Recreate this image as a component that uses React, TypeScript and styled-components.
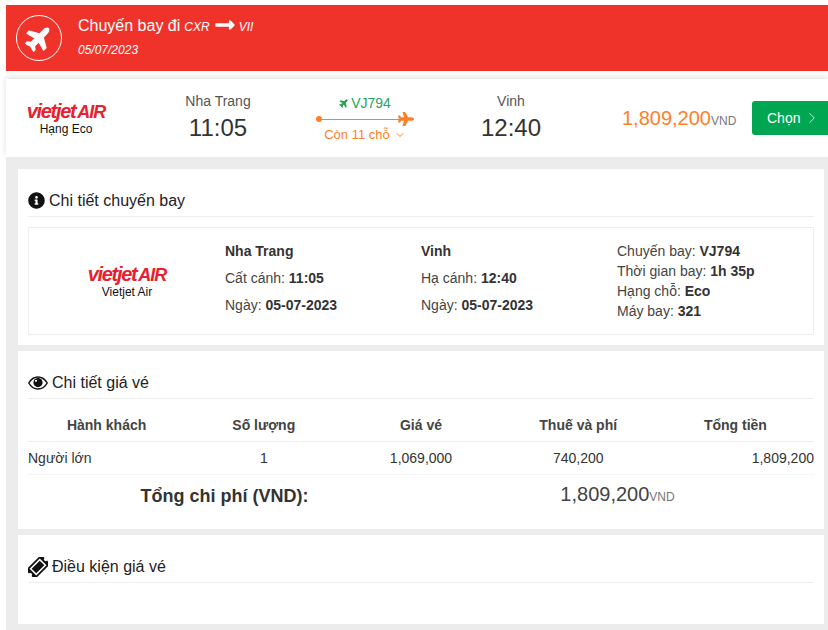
import styled, { createGlobalStyle } from "styled-components";
import { FaInfoCircle, FaLongArrowAltRight, FaPlane } from "react-icons/fa";
import { ChevronDown, ChevronRight } from "lucide-react";

const GlobalStyle = createGlobalStyle`
  * {
    box-sizing: border-box;
  }
  html, body {
    margin: 0;
    height: 630px;
    overflow: hidden;
    background: #fff;
    font-family: "Liberation Sans", Arial, sans-serif;
    font-size: 14px;
    color: #333;
  }
`;

const Page = styled.div`
  padding: 5px 0 0 6px;
  display: flex;
  flex-direction: column;
`;

const Header = styled.div`
  height: 66px;
  background: #ef332b;
  color: #fff;
  display: flex;
  align-items: center;
  padding-left: 10px;
  gap: 16px;
`;

const PlaneCircle = styled.div`
  width: 46px;
  height: 46px;
  border: 1px solid #fff;
  border-radius: 50%;
  display: flex;
  align-items: center;
  justify-content: center;
  font-size: 28px;

  svg {
    transform: rotate(-45deg);
  }
`;

const HeaderText = styled.div`
  display: flex;
  flex-direction: column;
  gap: 5px;
  margin-top: -3px;
`;

const HeaderTitle = styled.div`
  font-size: 16px;
  line-height: 20px;
  display: flex;
  align-items: center;
  gap: 4px;
`;

const Route = styled.i`
  font-size: 12px;
  margin-top: 2px;
`;

const RouteArrow = styled.span`
  display: flex;
  font-size: 22px;
  margin: -3px -1px 0 0;
`;

const HeaderDate = styled.i`
  font-size: 12px;
  line-height: 16px;
`;

const FlightCard = styled.div`
  margin-top: 8px;
  height: 78px;
  background: #fff;
  box-shadow: 0 -2px 6px rgba(0, 0, 0, 0.12);
  display: grid;
  grid-template-columns: 120px 184px 110px 182px 226px;
  align-items: center;
`;

const LogoBlock = styled.div`
  display: flex;
  flex-direction: column;
  align-items: center;
  color: #111;
  font-size: 12px;
  line-height: 14px;
`;

const Logo = styled.div`
  color: #e8212e;
  font-size: 20px;
  line-height: 20px;
  font-weight: bold;
  font-style: italic;
  letter-spacing: -1.3px;
  white-space: nowrap;
`;

const LogoAir = styled.span`
  font-size: 18px;
  margin-left: 2px;
  letter-spacing: -1px;
`;

const Stop = styled.div`
  display: flex;
  flex-direction: column;
  align-items: center;
  gap: 2px;
  color: #555;
`;

const StopCity = styled.div`
  font-size: 14px;
  line-height: 18px;
`;

const StopTime = styled.div`
  font-size: 24px;
  line-height: 32px;
  color: #333;
`;

const Path = styled.div`
  display: flex;
  flex-direction: column;
  align-items: center;
`;

const FlightCode = styled.div`
  color: #2aa35a;
  font-size: 14px;
  line-height: 18px;
  padding-top: 2px;
  display: flex;
  align-items: center;
  gap: 2px;

  svg {
    transform: rotate(-45deg);
  }
`;

const PathLine = styled.div`
  width: 98px;
  height: 12px;
  margin-top: 1px;
  display: flex;
  align-items: center;
  position: relative;
  color: #ff7f27;

  &::before {
    content: "";
    width: 6px;
    height: 6px;
    border-radius: 50%;
    background: #ff7f27;
    flex-shrink: 0;
  }

  &::after {
    content: "";
    flex: 1;
    height: 1px;
    background: #ff7f27;
  }

  svg {
    position: absolute;
    right: 0;
    top: -2px;
  }
`;

const Seats = styled.div`
  color: #ff7f27;
  font-size: 13px;
  line-height: 18px;
  margin-top: 1px;
  display: flex;
  align-items: center;
  gap: 4px;
`;

const PriceBlock = styled.div`
  display: flex;
  align-items: center;
  justify-content: space-between;
  padding-left: 20px;
`;

const Price = styled.div`
  color: #ff7f27;
  font-size: 20px;
`;

const Currency = styled.span`
  color: #777;
  font-size: 12px;
`;

const SelectButton = styled.button`
  width: 76px;
  height: 34px;
  border: none;
  padding: 0 0 0 15px;
  background: #00a651;
  color: #fff;
  border-radius: 3px 0 0 3px;
  font-family: inherit;
  font-size: 14px;
  display: flex;
  align-items: center;
  gap: 3px;
`;

const Sections = styled.div`
  background: #ececec;
  padding: 12px 4px 6px 12px;
  height: 473px;
  display: flex;
  flex-direction: column;
  gap: 6px;
`;

const Section = styled.section<{ $height: number }>`
  height: ${(p) => p.$height}px;
  background: #fff;
  padding: 0 10px;
  flex-shrink: 0;
`;

const SectionTitle = styled.h3`
  margin: 0;
  padding: 18px 0 2px;
  height: 48px;
  border-bottom: 1px solid #eee;
  font-weight: normal;
  font-size: 16px;
  line-height: 20px;
  color: #222;
  display: flex;
  align-items: center;
  gap: 4px;

  svg {
    color: #111;
    flex-shrink: 0;
  }
`;

const DetailBox = styled.div`
  margin-top: 10px;
  height: 108px;
  border: 1px solid #eee;
  display: grid;
  grid-template-columns: 196px 196px 196px 1fr;
  align-items: start;
`;

const DetailLogo = styled(LogoBlock)`
  align-self: center;
`;

const DetailCol = styled.div`
  padding-top: 10px;
  font-size: 14px;
  line-height: 27px;
  color: #444;

  b {
    color: #333;
  }
`;

const InfoCol = styled.div`
  padding-top: 13px;
  font-size: 14px;
  line-height: 20px;
  color: #444;

  b {
    color: #333;
  }
`;

const PriceRow = styled.div<{ $border?: string }>`
  display: grid;
  grid-template-columns: repeat(5, 1fr);
  align-items: center;
  height: 33px;
  border-bottom: 1px ${(p) => p.$border ?? "solid"} #eee;
`;

const HeadRow = styled(PriceRow)`
  margin-top: 10px;
  font-weight: bold;
  color: #444;
  text-align: center;
`;

const Cell = styled.div<{ $align?: string }>`
  text-align: ${(p) => p.$align ?? "center"};
  color: #333;
`;

const TotalRow = styled.div`
  display: grid;
  grid-template-columns: 1fr 1fr;
  height: 42px;
  align-items: center;
  text-align: center;
`;

const TotalLabel = styled.div`
  font-size: 18px;
  font-weight: bold;
  color: #333;
`;

const TotalValue = styled.div`
  font-size: 20px;
  color: #444;
  padding-bottom: 4px;
`;

const columns = [
  "Hành khách",
  "Số lượng",
  "Giá vé",
  "Thuế và phí",
  "Tổng tiền",
];

const EyeIcon = () => (
  <svg width="20" height="14" viewBox="0 0 20 14">
    <path
      d="M.8 7C3 3 6.4.9 10 .9S17 3 19.2 7C17 11 13.6 13.1 10 13.1S3 11 .8 7Z"
      fill="none"
      stroke="currentColor"
      strokeWidth="1.5"
    />
    <circle cx="10" cy="6.6" r="4.6" fill="currentColor" />
    <circle cx="8" cy="4.8" r="1.1" fill="#fff" />
  </svg>
);

const TicketIcon = () => (
  <svg width="20" height="20" viewBox="0 0 20 20">
    <g transform="rotate(-45 10 10)">
      <path
        d="M-1 3.5h22v4.7a1.8 1.8 0 0 0 0 3.6v4.7H-1v-4.7a1.8 1.8 0 0 0 0-3.6Z"
        fill="currentColor"
      />
      <rect x="3.5" y="6" width="13" height="8" fill="none" stroke="#fff" strokeWidth="1.5" />
    </g>
  </svg>
);

export default function App() {
  return (
    <>
      <GlobalStyle />
      <Page>
        <Header>
          <PlaneCircle>
            <FaPlane />
          </PlaneCircle>
          <HeaderText>
            <HeaderTitle>
              Chuyến bay đi <Route>CXR</Route>
              <RouteArrow>
                <FaLongArrowAltRight />
              </RouteArrow>
              <Route>VII</Route>
            </HeaderTitle>
            <HeaderDate>05/07/2023</HeaderDate>
          </HeaderText>
        </Header>

        <FlightCard>
          <LogoBlock>
            <Logo>
              vietjet<LogoAir>AIR</LogoAir>
            </Logo>
            Hạng Eco
          </LogoBlock>
          <Stop>
            <StopCity>Nha Trang</StopCity>
            <StopTime>11:05</StopTime>
          </Stop>
          <Path>
            <FlightCode>
              <FaPlane size={10} />
              VJ794
            </FlightCode>
            <PathLine>
              <FaPlane size={16} />
            </PathLine>
            <Seats>
              Còn 11 chỗ
              <ChevronDown size={12} strokeWidth={2} />
            </Seats>
          </Path>
          <Stop>
            <StopCity>Vinh</StopCity>
            <StopTime>12:40</StopTime>
          </Stop>
          <PriceBlock>
            <Price>
              1,809,200<Currency>VND</Currency>
            </Price>
            <SelectButton>
              Chọn
              <ChevronRight size={18} strokeWidth={1} />
            </SelectButton>
          </PriceBlock>
        </FlightCard>

        <Sections>
          <Section $height={176}>
            <SectionTitle>
              <FaInfoCircle size={17} />
              Chi tiết chuyến bay
            </SectionTitle>
            <DetailBox>
              <DetailLogo>
                <Logo>
                  vietjet<LogoAir>AIR</LogoAir>
                </Logo>
                Vietjet Air
              </DetailLogo>
              <DetailCol>
                <b>Nha Trang</b>
                <br />
                Cất cánh: <b>11:05</b>
                <br />
                Ngày: <b>05-07-2023</b>
              </DetailCol>
              <DetailCol>
                <b>Vinh</b>
                <br />
                Hạ cánh: <b>12:40</b>
                <br />
                Ngày: <b>05-07-2023</b>
              </DetailCol>
              <InfoCol>
                Chuyến bay: <b>VJ794</b>
                <br />
                Thời gian bay: <b>1h 35p</b>
                <br />
                Hạng chỗ: <b>Eco</b>
                <br />
                Máy bay: <b>321</b>
              </InfoCol>
            </DetailBox>
          </Section>

          <Section $height={178}>
            <SectionTitle>
              <EyeIcon />
              Chi tiết giá vé
            </SectionTitle>
            <HeadRow>
              {columns.map((c) => (
                <div key={c}>{c}</div>
              ))}
            </HeadRow>
            <PriceRow $border="dotted">
              <Cell $align="left">Người lớn</Cell>
              <Cell>1</Cell>
              <Cell>1,069,000</Cell>
              <Cell>740,200</Cell>
              <Cell $align="right">1,809,200</Cell>
            </PriceRow>
            <TotalRow>
              <TotalLabel>Tổng chi phí (VND):</TotalLabel>
              <TotalValue>
                1,809,200<Currency>VND</Currency>
              </TotalValue>
            </TotalRow>
          </Section>

          <Section $height={89}>
            <SectionTitle>
              <TicketIcon />
              Điều kiện giá vé
            </SectionTitle>
          </Section>
        </Sections>
      </Page>
    </>
  );
}
